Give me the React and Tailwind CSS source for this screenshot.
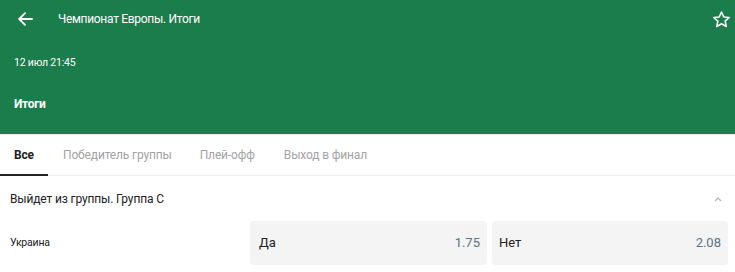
import React from "react";

export default function App() {
  return (
    <div className="w-[735px] h-[272px] overflow-hidden bg-white" style={{ fontFamily: "Roboto, 'Liberation Sans', sans-serif" }}>
      <div className="h-[134px] bg-[#1b7c4c] text-white relative">
        <div className="flex items-center h-[38px]">
          <svg className="ml-[18px]" width="15" height="14" viewBox="0 0 15 14" fill="none" stroke="white" strokeWidth="1.8" strokeLinecap="round" strokeLinejoin="round">
            <path d="M14 7H1.5M7 1.2L1.2 7L7 12.8" />
          </svg>
          <span className="ml-[25px] text-[12px] tracking-[-0.3px]">Чемпионат Европы. Итоги</span>
          <svg className="ml-auto mr-[4px]" width="19" height="19" viewBox="0 0 24 24" fill="none" stroke="white" strokeWidth="2" strokeLinejoin="round">
            <path d="M12 2.5l2.9 6.3 6.8.7-5.1 4.6 1.5 6.8L12 17.4l-6.1 3.5 1.5-6.8L2.3 9.5l6.8-.7z" />
          </svg>
        </div>
        <div className="pl-[14px] pt-[17px] text-[10.5px] leading-[16px] tracking-[-0.2px]">12 июл 21:45</div>
        <div className="pl-[14px] pt-[25px] text-[12px] font-bold leading-[16px] tracking-[-0.3px]">Итоги</div>
      </div>
      <div className="h-[1px] bg-[#e9eeec]" />
      <div className="flex h-[41px] border-b border-[#eeeeee] text-[12px] tracking-[-0.15px]">
        <div className="relative w-[48px] flex items-center pl-[14px] font-bold text-[#222]">
          Все
          <div className="absolute left-0 bottom-[-1px] w-[48px] h-[2px] bg-[#222]" />
        </div>
        <div className="flex items-center pl-[15px] text-[#a3a3a3]">Победитель группы</div>
        <div className="flex items-center pl-[28px] text-[#a3a3a3]">Плей-офф</div>
        <div className="flex items-center pl-[29px] text-[#a3a3a3]">Выход в финал</div>
      </div>
      <div className="flex items-center h-[45px] pl-[10px] pr-[12px] text-[12px] text-[#222] tracking-[-0.15px]">
        <span>Выйдет из группы. Группа С</span>
        <svg className="ml-auto" width="10" height="6" viewBox="0 0 10 6" fill="none" stroke="#b5b5b5" strokeWidth="1.3">
          <path d="M2 5l3-3 3 3" />
        </svg>
      </div>
      <div className="flex items-center h-[44px]">
        <div className="w-[250px] pl-[10px] text-[10.5px] text-[#222] tracking-[-0.2px]">Украина</div>
        <div className="flex gap-[5px]">
          <div className="w-[237px] h-[44px] rounded-[4px] bg-[#f4f4f4] flex items-center justify-between pl-[9px] pr-[7px] text-[13px]">
            <span className="text-[#222]">Да</span>
            <span className="text-[#5d7080]">1.75</span>
          </div>
          <div className="w-[236px] h-[44px] rounded-[4px] bg-[#f4f4f4] flex items-center justify-between pl-[7px] pr-[7px] text-[13px]">
            <span className="text-[#222]">Нет</span>
            <span className="text-[#5d7080]">2.08</span>
          </div>
        </div>
      </div>
    </div>
  );
}
